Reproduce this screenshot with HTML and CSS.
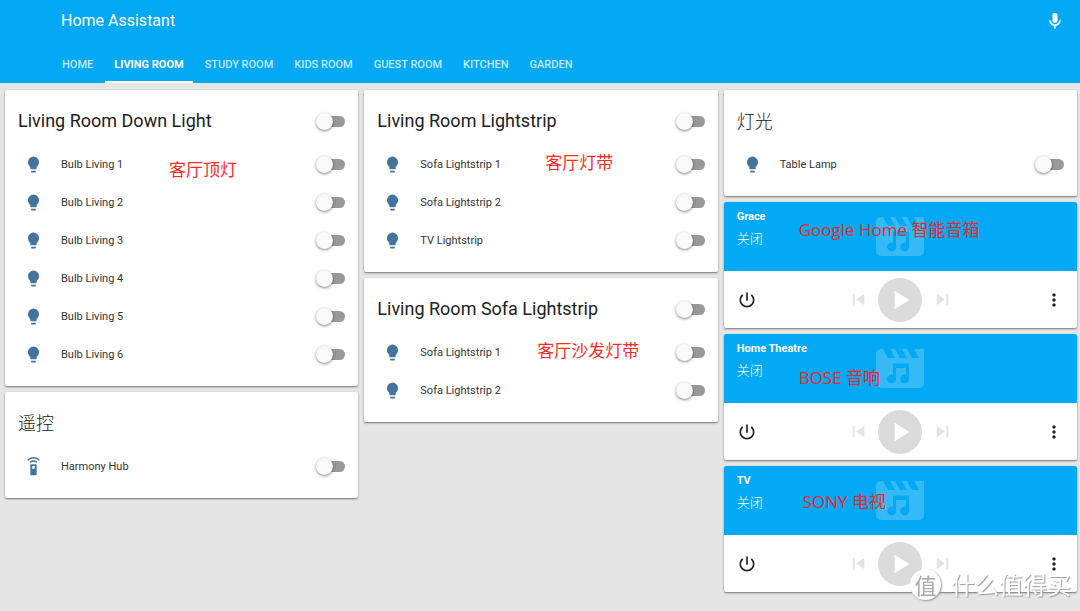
FILE: index.html
```html
<!DOCTYPE html>
<html lang="en">
<head>
<meta charset="utf-8">
<meta name="viewport" content="width=device-width, initial-scale=1">
<title>Home Assistant</title>
<link rel="stylesheet" href="styles.css">
</head>
<body>
<svg class="sprite" aria-hidden="true">
  <symbol id="bulb" viewBox="0 0 24 24"><path d="M12,2A7,7 0 0,0 5,9C5,11.38 6.19,13.47 8,14.74V17A1,1 0 0,0 9,18H15A1,1 0 0,0 16,17V14.74C17.81,13.47 19,11.38 19,9A7,7 0 0,0 12,2M9,21A1,1 0 0,0 10,22H14A1,1 0 0,0 15,21V20H9V21Z"/></symbol>
  <symbol id="remote" viewBox="0 0 24 24"><path d="M12,0C8.96,0 6.21,1.23 4.22,3.22L5.63,4.63C7.26,3 9.5,2 12,2C14.5,2 16.74,3 18.36,4.64L19.77,3.23C17.79,1.23 15.04,0 12,0M7.05,6.05L8.46,7.46C9.37,6.56 10.62,6 12,6C13.38,6 14.63,6.56 15.54,7.46L16.95,6.05C15.68,4.78 13.93,4 12,4C10.07,4 8.32,4.78 7.05,6.05M12,15A2,2 0 0,1 10,13A2,2 0 0,1 12,11A2,2 0 0,1 14,13A2,2 0 0,1 12,15M15,9H9A1,1 0 0,0 8,10V22A1,1 0 0,0 9,23H15A1,1 0 0,0 16,22V10A1,1 0 0,0 15,9Z"/></symbol>
  <symbol id="power" viewBox="0 0 24 24"><path d="M13 3h-2v10h2V3zm4.83 2.17l-1.42 1.42C17.99 7.86 19 9.81 19 12c0 3.87-3.13 7-7 7s-7-3.13-7-7c0-2.19 1.01-4.14 2.58-5.42L6.17 5.17C4.23 6.82 3 9.26 3 12c0 4.97 4.03 9 9 9s9-4.03 9-9c0-2.74-1.23-5.18-3.17-6.83z"/></symbol>
  <symbol id="prev" viewBox="0 0 24 24"><path d="M6 6h2v12H6zm3.5 6l8.5 6V6z"/></symbol>
  <symbol id="next" viewBox="0 0 24 24"><path d="M6 18l8.5-6L6 6v12zM16 6v12h2V6h-2z"/></symbol>
  <symbol id="play" viewBox="0 0 24 24"><path d="M8 5v14l11-7z"/></symbol>
  <symbol id="more" viewBox="0 0 24 24"><path d="M12 8c1.1 0 2-.9 2-2s-.9-2-2-2-2 .9-2 2 .9 2 2 2zm0 2c-1.1 0-2 .9-2 2s.9 2 2 2 2-.9 2-2-.9-2-2-2zm0 6c-1.1 0-2 .9-2 2s.9 2 2 2 2-.9 2-2-.9-2-2-2z"/></symbol>
  <symbol id="mic" viewBox="0 0 24 24"><path d="M12,2A3,3 0 0,1 15,5V11A3,3 0 0,1 12,14A3,3 0 0,1 9,11V5A3,3 0 0,1 12,2M19,11C19,14.53 16.39,17.44 13,17.93V21H11V17.93C7.61,17.44 5,14.53 5,11H7A5,5 0 0,0 12,16A5,5 0 0,0 17,11H19Z"/></symbol>
  <symbol id="clapper" viewBox="0 0 48 39"><path fill-rule="evenodd" d="M5 0H7L12 9H19L14 0H19L24 9H31L26 0H31L36 9H43L38 0H48V34A5 5 0 0 1 43 39H5A5 5 0 0 1 0 34V5A5 5 0 0 1 5 0ZM17 14.500V25.800A4.400 4.400 0 1 0 20 30V19H30V25.800A4.400 4.400 0 1 0 33 30V14.500Z"/></symbol>
</svg>

<header class="app-header">
  <div class="toolbar">
    <h1 class="app-title">Home Assistant</h1>
    <button class="icon-button mic" aria-label="Voice command"><svg><use href="#mic"/></svg></button>
  </div>
  <nav class="tabs">
    <a class="tab" href="#home">HOME</a>
    <a class="tab active" href="#living" aria-current="page">LIVING ROOM</a>
    <a class="tab" href="#study">STUDY ROOM</a>
    <a class="tab" href="#kids">KIDS ROOM</a>
    <a class="tab" href="#guest">GUEST ROOM</a>
    <a class="tab" href="#kitchen">KITCHEN</a>
    <a class="tab" href="#garden">GARDEN</a>
  </nav>
</header>

<main class="columns">
  <div class="column">
    <section class="card">
      <div class="card-head"><h2><label for="g1">Living Room Down Light</label></h2><input class="toggle" type="checkbox" id="g1"></div>
      <div class="row"><svg class="state-icon"><use href="#bulb"/></svg><label for="b1">Bulb Living 1</label><input class="toggle" type="checkbox" id="b1"></div>
      <div class="row"><svg class="state-icon"><use href="#bulb"/></svg><label for="b2">Bulb Living 2</label><input class="toggle" type="checkbox" id="b2"></div>
      <div class="row"><svg class="state-icon"><use href="#bulb"/></svg><label for="b3">Bulb Living 3</label><input class="toggle" type="checkbox" id="b3"></div>
      <div class="row"><svg class="state-icon"><use href="#bulb"/></svg><label for="b4">Bulb Living 4</label><input class="toggle" type="checkbox" id="b4"></div>
      <div class="row"><svg class="state-icon"><use href="#bulb"/></svg><label for="b5">Bulb Living 5</label><input class="toggle" type="checkbox" id="b5"></div>
      <div class="row"><svg class="state-icon"><use href="#bulb"/></svg><label for="b6">Bulb Living 6</label><input class="toggle" type="checkbox" id="b6"></div>
      <span class="note note-ceiling">客厅顶灯</span>
    </section>
    <section class="card">
      <div class="card-head"><h2 lang="zh">遥控</h2></div>
      <div class="row"><svg class="state-icon"><use href="#remote"/></svg><label for="hub">Harmony Hub</label><input class="toggle" type="checkbox" id="hub"></div>
    </section>
  </div>

  <div class="column">
    <section class="card">
      <div class="card-head"><h2><label for="g2">Living Room Lightstrip</label></h2><input class="toggle" type="checkbox" id="g2"></div>
      <div class="row"><svg class="state-icon"><use href="#bulb"/></svg><label for="s1">Sofa Lightstrip 1</label><input class="toggle" type="checkbox" id="s1"></div>
      <div class="row"><svg class="state-icon"><use href="#bulb"/></svg><label for="s2">Sofa Lightstrip 2</label><input class="toggle" type="checkbox" id="s2"></div>
      <div class="row"><svg class="state-icon"><use href="#bulb"/></svg><label for="s3">TV Lightstrip</label><input class="toggle" type="checkbox" id="s3"></div>
      <span class="note note-strip">客厅灯带</span>
    </section>
    <section class="card">
      <div class="card-head"><h2><label for="g3">Living Room Sofa Lightstrip</label></h2><input class="toggle" type="checkbox" id="g3"></div>
      <div class="row"><svg class="state-icon"><use href="#bulb"/></svg><label for="f1">Sofa Lightstrip 1</label><input class="toggle" type="checkbox" id="f1"></div>
      <div class="row"><svg class="state-icon"><use href="#bulb"/></svg><label for="f2">Sofa Lightstrip 2</label><input class="toggle" type="checkbox" id="f2"></div>
      <span class="note note-sofa">客厅沙发灯带</span>
    </section>
  </div>

  <div class="column">
    <section class="card">
      <div class="card-head"><h2 lang="zh">灯光</h2></div>
      <div class="row"><svg class="state-icon"><use href="#bulb"/></svg><label for="t1">Table Lamp</label><input class="toggle" type="checkbox" id="t1"></div>
    </section>
    <section class="card media">
      <div class="banner">
        <svg class="clapper"><use href="#clapper"/></svg>
        <h3>Grace</h3><p>关闭</p>
      </div>
      <div class="controls">
        <button class="icon-button" aria-label="Power"><svg><use href="#power"/></svg></button>
        <div class="playback">
          <button class="icon-button skip" aria-label="Previous" disabled><svg><use href="#prev"/></svg></button>
          <button class="icon-button play" aria-label="Play" disabled><svg><use href="#play"/></svg></button>
          <button class="icon-button skip" aria-label="Next" disabled><svg><use href="#next"/></svg></button>
        </div>
        <button class="icon-button more" aria-label="More"><svg><use href="#more"/></svg></button>
      </div>
      <span class="note note-google">Google Home 智能音箱</span>
    </section>
    <section class="card media">
      <div class="banner">
        <svg class="clapper"><use href="#clapper"/></svg>
        <h3>Home Theatre</h3><p>关闭</p>
      </div>
      <div class="controls">
        <button class="icon-button" aria-label="Power"><svg><use href="#power"/></svg></button>
        <div class="playback">
          <button class="icon-button skip" aria-label="Previous" disabled><svg><use href="#prev"/></svg></button>
          <button class="icon-button play" aria-label="Play" disabled><svg><use href="#play"/></svg></button>
          <button class="icon-button skip" aria-label="Next" disabled><svg><use href="#next"/></svg></button>
        </div>
        <button class="icon-button more" aria-label="More"><svg><use href="#more"/></svg></button>
      </div>
      <span class="note note-bose">BOSE 音响</span>
    </section>
    <section class="card media">
      <div class="banner">
        <svg class="clapper"><use href="#clapper"/></svg>
        <h3>TV</h3><p>关闭</p>
      </div>
      <div class="controls">
        <button class="icon-button" aria-label="Power"><svg><use href="#power"/></svg></button>
        <div class="playback">
          <button class="icon-button skip" aria-label="Previous" disabled><svg><use href="#prev"/></svg></button>
          <button class="icon-button play" aria-label="Play" disabled><svg><use href="#play"/></svg></button>
          <button class="icon-button skip" aria-label="Next" disabled><svg><use href="#next"/></svg></button>
        </div>
        <button class="icon-button more" aria-label="More"><svg><use href="#more"/></svg></button>
      </div>
      <span class="note note-sony">SONY 电视</span>
    </section>
  </div>
</main>

<div class="watermark"><span class="seal">值</span><span>什么值得买</span></div>
</body>
</html>
```
FILE: styles.css
```css
* { box-sizing: border-box; }

body {
  margin: 0;
  min-height: 100vh;
  background: #e5e5e5;
  color: #212121;
  font: 11px/16px Roboto, "Noto Sans CJK SC", sans-serif;
}

h1, h2, h3, p { margin: 0; font-weight: 400; }

svg { display: block; fill: currentColor; }

.sprite { position: absolute; width: 0; height: 0; }

.app-header {
  background: #03a9f4;
  color: #fff;
}

.toolbar {
  display: flex;
  align-items: center;
  justify-content: space-between;
  height: 41px;
  padding: 0 15px 0 61px;
}

.app-title { font-size: 16px; line-height: 20px; }

.icon-button {
  display: flex;
  align-items: center;
  justify-content: center;
  width: 20px;
  height: 20px;
  padding: 0;
  border: 0;
  background: none;
  color: inherit;
}

.icon-button svg { width: 20px; height: 20px; }

.tabs {
  display: flex;
  gap: 3px;
  height: 42px;
  padding-left: 53px;
}

.tab {
  display: flex;
  align-items: center;
  padding: 8px 9px 0;
  border-bottom: 2px solid transparent;
  color: #c3eafc;
  font-weight: 500;
  text-decoration: none;
}

.tab.active {
  border-color: #fff;
  color: #fff;
  font-weight: 700;
}

.columns {
  display: grid;
  grid-template-columns: repeat(3, minmax(0, 1fr));
  align-items: start;
  gap: 6px;
  padding: 7px 3px 16px 5px;
}

.column { display: grid; gap: 6px; }

.card {
  position: relative;
  padding: 11px 13px 13px;
  border-radius: 2px;
  background: #fff;
  box-shadow: 0 1px 2px rgba(0, 0, 0, 0.5);
}

.card-head {
  display: flex;
  align-items: center;
  justify-content: space-between;
  height: 40px;
  margin-bottom: 4px;
}

.card-head h2 { font-size: 18px; line-height: 24px; }
.card-head h2:lang(zh) { padding-top: 2px; font-weight: 300; }

.row {
  display: flex;
  align-items: center;
  height: 38px;
  padding-left: 6px;
}

.row label {
  flex: 1;
  padding-top: 2px;
  color: #333;
}

.state-icon {
  width: 19px;
  height: 19px;
  margin-right: 18px;
  color: #44739e;
}

.toggle {
  appearance: none;
  position: relative;
  width: 29px;
  height: 17px;
  margin: 0;
}

.toggle::before {
  content: "";
  position: absolute;
  inset: 3px 0 3px 3px;
  border-radius: 6px;
  background: #999;
}

.toggle::after {
  content: "";
  position: absolute;
  top: 0;
  left: 0;
  width: 17px;
  height: 17px;
  border-radius: 50%;
  background: #fafafa;
  box-shadow: 0 1px 3px rgba(0, 0, 0, 0.5);
}

.toggle:checked::before { background: #81d4fa; }
.toggle:checked::after { left: 12px; background: #03a9f4; }

.media { padding: 0; }

.banner {
  position: relative;
  height: 69px;
  padding: 7px 13px 0;
  border-radius: 2px 2px 0 0;
  background: #03a9f4;
  color: #fff;
}

.banner h3 { font-size: 11px; font-weight: 700; }

.banner p {
  margin-top: 4px;
  font-size: 13px;
  font-weight: 300;
  line-height: 20px;
}

.clapper {
  position: absolute;
  top: 15px;
  left: calc(50% - 24px);
  width: 48px;
  height: 39px;
  color: #35baf6;
}

.controls {
  display: grid;
  grid-template-columns: 1fr auto 1fr;
  align-items: center;
  height: 57px;
  padding: 0 13px;
}

.playback {
  display: flex;
  align-items: center;
  gap: 8px;
}

.skip { width: 24px; height: 24px; color: #e3e3e3; }
.skip svg { width: 23px; height: 23px; }

.play {
  width: 44px;
  height: 44px;
  border-radius: 50%;
  background: #dbdbdb;
  color: #fff;
}

.play svg { width: 32px; height: 32px; }

.more { justify-self: end; }
.more svg { width: 22px; height: 22px; }

.note {
  position: absolute;
  color: #ff2a1c;
  font: 17px/24px "Open Sans", "Noto Sans CJK SC", sans-serif;
  white-space: nowrap;
}

.note-ceiling { top: 68px; left: 164px; }
.note-strip { top: 61px; left: 181px; }
.note-sofa { top: 61px; left: 173px; }
.note-google { top: 16px; left: 75px; color: #e8282a; }
.note-bose { top: 32px; left: 75px; color: #e8282a; }
.note-sony { top: 24px; left: 79px; color: #e8282a; }

.watermark {
  position: fixed;
  right: 9px;
  bottom: 11px;
  display: flex;
  align-items: center;
  gap: 10px;
  color: #fff;
  font: 24px/32px "Noto Sans CJK SC", sans-serif;
  text-shadow: 1px 1px 1px #999;
}

.seal {
  width: 31px;
  height: 31px;
  border-radius: 50%;
  background: #fff;
  box-shadow: 1px 1px 2px #999;
  color: #aaa;
  font-size: 22px;
  line-height: 30px;
  text-align: center;
  text-shadow: none;
}
```
